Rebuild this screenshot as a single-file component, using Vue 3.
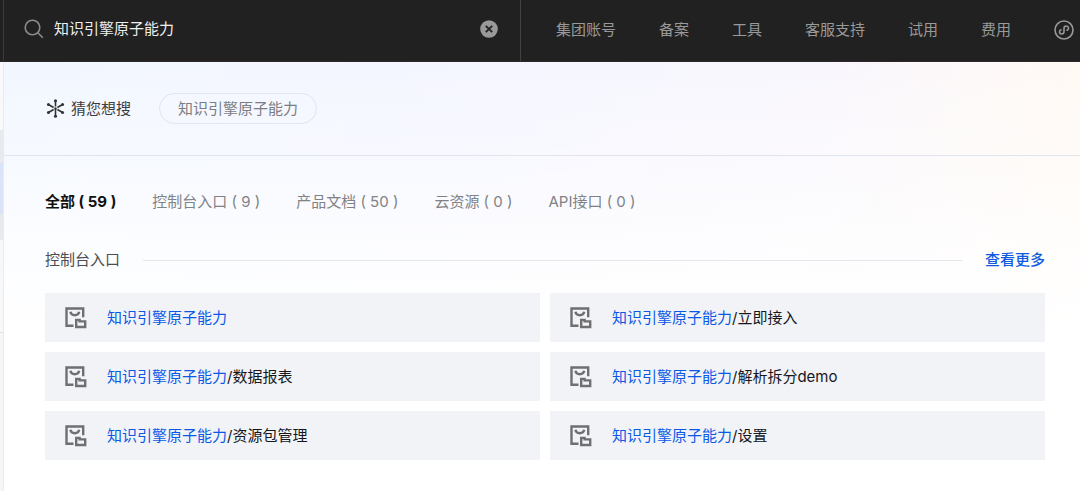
<script setup>
import { ref } from 'vue'

const keyword = ref('知识引擎原子能力')
const navLinks = ['集团账号', '备案', '工具', '客服支持', '试用', '费用']
const tabs = [
  { name: '全部', count: 59 },
  { name: '控制台入口', count: 9 },
  { name: '产品文档', count: 50 },
  { name: '云资源', count: 0 },
  { name: 'API接口', count: 0 },
]
const activeTab = ref('全部')
const entries = ['', '/立即接入', '/数据报表', '/解析拆分demo', '/资源包管理', '/设置']
</script>

<template>
  <div class="page">
    <header class="topbar">
      <form class="search" role="search" @submit.prevent>
        <svg class="search-icon" viewBox="0 0 20 20" aria-hidden="true">
          <circle cx="8.5" cy="8.5" r="7.3" />
          <path d="M13.8 13.8L18.8 18.8" />
        </svg>
        <input v-model="keyword" class="search-input" type="text" aria-label="搜索" />
        <button class="clear" type="button" aria-label="清除" @click="keyword = ''">
          <svg viewBox="0 0 18 18" aria-hidden="true">
            <circle cx="9" cy="9" r="8.8" />
            <path d="M5.8 5.8L12.2 12.2M12.2 5.8L5.8 12.2" />
          </svg>
        </button>
      </form>
      <nav class="nav">
        <a v-for="link in navLinks" :key="link" href="#">{{ link }}</a>
        <a class="mini" href="#" aria-label="小程序">
          <svg viewBox="0 0 20 20" aria-hidden="true">
            <circle cx="10" cy="10" r="9" />
            <path d="M7 9.8C4.8 10.6 5 14 7.6 14C9.2 14 10 13 10 11.5V8.5C10 7 10.8 6 12.4 6C15 6 15.2 9.4 13 10.2" />
          </svg>
        </a>
      </nav>
    </header>

    <div class="body">
      <aside class="rail" aria-hidden="true"></aside>
      <main class="panel">
        <section class="suggest">
          <svg class="spark" viewBox="0 0 20 20" aria-hidden="true">
            <path d="M10 2V8M10 10V18M3 6L8 8.9M12 11.1L17 14M3 14L8 11.1M12 8.9L17 6" />
            <circle cx="10" cy="1.9" r="1.6" />
            <circle cx="10" cy="18.1" r="1.6" />
            <circle cx="10" cy="10" r="1.3" />
            <circle cx="2.6" cy="5.8" r="1.6" />
            <circle cx="17.4" cy="14.2" r="1.6" />
            <circle cx="2.6" cy="14.2" r="1.6" />
            <circle cx="17.4" cy="5.8" r="1.6" />
          </svg>
          <span class="suggest-title">猜您想搜</span>
          <button class="pill" type="button">知识引擎原子能力</button>
        </section>

        <section class="results">
          <div class="tabs" role="tablist">
            <button
              v-for="tab in tabs"
              :key="tab.name"
              type="button"
              role="tab"
              class="tab"
              :class="{ active: tab.name === activeTab }"
              :aria-selected="tab.name === activeTab"
              @click="activeTab = tab.name"
            >{{ tab.name }} ( {{ tab.count }} )</button>
          </div>

          <div class="group-head">
            <h2>控制台入口</h2>
            <span class="rule"></span>
            <a href="#">查看更多</a>
          </div>

          <div class="grid">
            <a v-for="suffix in entries" :key="suffix" class="card" href="#">
              <svg class="entry-icon" viewBox="0 0 22 22" aria-hidden="true">
                <path d="M8.5 18.8H1.5V1.5H18.2V10.2" />
                <path d="M5.4 4.8C6.4 9.4 13.2 9.4 14.2 4.8" />
                <path d="M11.2 20V12.9H14.6V14.4H20.2V20Z" />
              </svg>
              <span class="entry"><em>知识引擎原子能力</em>{{ suffix }}</span>
            </a>
          </div>
        </section>
      </main>
    </div>
  </div>
</template>

<style>
body {
  background: #fff;
}
</style>

<style scoped>
.page {
  min-height: 100vh;
  display: flex;
  flex-direction: column;
  font-family: Inter, "Noto Sans CJK SC", sans-serif;
  font-size: 15px;
  line-height: 24px;
  color: #16181d;
}
.page * {
  box-sizing: border-box;
}
a {
  text-decoration: none;
  color: inherit;
}
button {
  font: inherit;
  color: inherit;
  background: none;
  border: 0;
  padding: 0;
  cursor: pointer;
}
svg {
  display: block;
  flex: none;
  fill: none;
}
.topbar {
  display: flex;
  height: 62px;
  padding-left: 3px;
  background: #212121;
  border-bottom: 1px solid #2e2a2c;
}
.search {
  flex: 0 0 518px;
  display: flex;
  align-items: center;
  padding: 0 22px 3px 20px;
  border-left: 1px solid #3a3a3a;
  border-right: 1px solid #424242;
}
.search-icon {
  width: 20px;
  height: 20px;
  stroke: #8a8a8a;
  stroke-width: 1.6;
}
.search-input {
  flex: 1;
  min-width: 0;
  margin: 0 10px;
  padding: 0;
  border: 0;
  outline: 0;
  background: transparent;
  color: #efefef;
  font: inherit;
}
.clear svg {
  width: 18px;
  height: 18px;
}
.clear circle {
  fill: #999;
}
.clear path {
  stroke: #212121;
  stroke-width: 1.8;
}
.nav {
  flex: 1;
  display: flex;
  align-items: center;
  gap: 43px;
  padding: 0 6px 2px 35px;
  color: #999;
  white-space: nowrap;
}
.mini svg {
  width: 20px;
  height: 20px;
  stroke: #999;
  stroke-width: 1.6;
  stroke-linecap: round;
}
.body {
  flex: 1;
  display: flex;
}
.rail {
  flex: 0 0 3px;
  background: linear-gradient(
    #f9f9fb 68px,
    #e9eaee 68px 101px,
    #dae3f8 101px 152px,
    #e8e9ed 152px 178px,
    #f8f8f9 178px 270px,
    #e2e3e8 270px 271px,
    #f6f6f9 271px
  );
}
.panel {
  flex: 1;
  min-width: 0;
  border-left: 1px solid #e9ebf2;
  background:
    linear-gradient(rgba(255, 255, 255, 0) 0, rgba(255, 255, 255, 0.3) 93px, rgba(255, 255, 255, 0.75) 180px, #fff 280px),
    linear-gradient(100deg, #f2f7ff 0%, #f5f6ff 45%, #f9f7fd 72%, #fff9f5 92%, #fffaf3 100%);
}
.suggest {
  display: flex;
  align-items: center;
  height: 94px;
  padding: 0 42px;
  border-bottom: 1px solid #e1e5f0;
}
.spark {
  width: 19px;
  height: 19px;
  stroke: #333;
  stroke-width: 1.7;
}
.spark circle {
  fill: #333;
  stroke: none;
}
.suggest-title {
  margin: 0 28px 0 6px;
  color: #3c3d40;
}
.pill {
  height: 31px;
  padding: 0 18px;
  border: 1px solid #e0e4f3;
  border-radius: 16px;
  color: #7b7d82;
}
.results {
  padding: 34px 35px 30px 41px;
}
.tabs {
  display: flex;
  gap: 36px;
  color: #808286;
}
.tab.active {
  color: #111;
  font-weight: 700;
}
.group-head {
  display: flex;
  align-items: center;
  gap: 23px;
  margin: 34px 0 21px;
}
.group-head h2 {
  margin: 0;
  font-size: 15px;
  font-weight: 400;
  color: #4c4d50;
}
.rule {
  flex: 1;
  height: 1px;
  background: #e3e6ec;
}
.group-head a {
  color: #0f5be0;
  font-weight: 500;
}
.grid {
  display: grid;
  grid-template-columns: 1fr 1fr;
  gap: 10px;
}
.card {
  display: flex;
  align-items: center;
  gap: 20px;
  height: 49px;
  padding: 0 20px;
  background: #f2f3f7;
}
.entry-icon {
  width: 22px;
  height: 22px;
  stroke: #6f6f71;
  stroke-width: 2.4;
}
.entry em {
  font-style: normal;
  color: #0a59e6;
}
</style>
